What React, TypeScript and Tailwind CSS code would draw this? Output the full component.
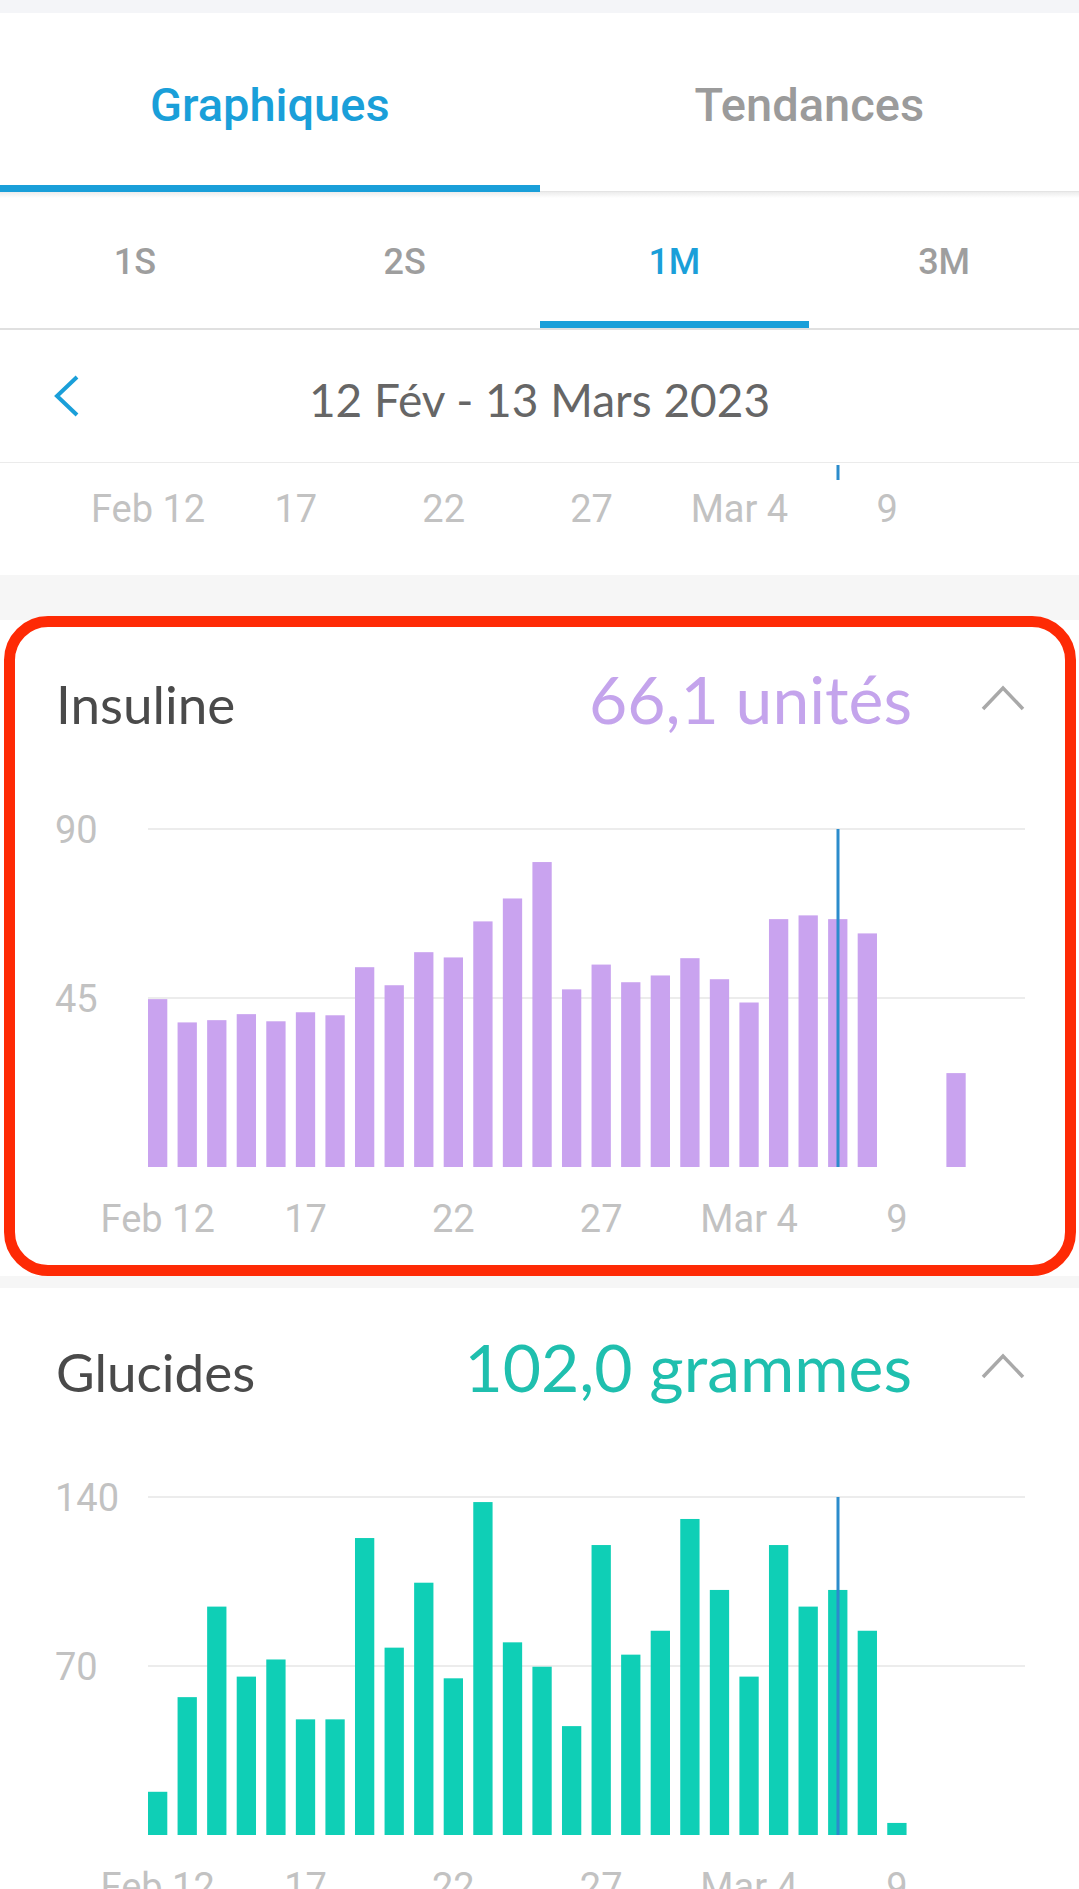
import React from 'react';

const insuline: (number | null)[] = [
  44.7, 38.5, 39.1, 40.7, 38.8, 41.2, 40.4, 53.2, 48.4, 57.2, 55.8, 65.4, 71.5, 81.2, 47.3,
  53.9, 49.2, 51.0, 55.6, 50.0, 43.8, 66.0, 67.0, 66.0, 62.2, null, null, 25.0, null, null,
];

const glucides: (number | null)[] = [
  17.9, 57.1, 94.6, 65.6, 72.7, 47.9, 47.9, 123.0, 77.6, 104.5, 64.9, 137.9, 79.8, 69.7, 45.1,
  120.1, 74.7, 84.6, 130.9, 101.5, 65.6, 120.1, 94.6, 101.5, 84.6, 5.0, null, null, null, null,
];

const dayLabels = ['Feb 12', '17', '22', '27', 'Mar 4', '9'];

const PITCH = 29.57;
const BAR_W = 19.3;
const LEFT = 148;

function BarChart({ values, max, color }: { values: (number | null)[]; max: number; color: string }) {
  const scale = 338 / max;
  return (
    <svg width="1079" height="460" viewBox="0 0 1079 460" className="block">
      <line x1={LEFT} x2="1025" y1="39" y2="39" stroke="#ececec" strokeWidth="2" />
      <line x1={LEFT} x2="1025" y1="208" y2="208" stroke="#ececec" strokeWidth="2" />
      <text x="55" y="53" fill="#c2c2c2" fontSize="38" fontFamily="Roboto, sans-serif">
        {max}
      </text>
      <text x="55" y="222" fill="#c2c2c2" fontSize="38" fontFamily="Roboto, sans-serif">
        {max / 2}
      </text>
      {values.map((v, i) =>
        v == null ? null : (
          <rect key={i} x={LEFT + i * PITCH} y={377 - v * scale} width={BAR_W} height={v * scale} fill={color} />
        ),
      )}
      <rect x="836.5" y="39" width="3" height="338" fill="#2b8ccc" />
      {dayLabels.map((d, k) => (
        <text
          key={d}
          x={LEFT + BAR_W / 2 + k * 5 * PITCH}
          y="442"
          textAnchor="middle"
          fill="#c2c2c2"
          fontSize="38"
          fontFamily="Roboto, sans-serif"
        >
          {d}
        </text>
      ))}
    </svg>
  );
}

function Caret() {
  return (
    <svg width="44" height="27" viewBox="0 0 44 27" className="ml-[69px] mt-[19px] shrink-0">
      <polyline points="2,24 22,3 42,24" fill="none" stroke="#a9a9a9" strokeWidth="3.5" />
    </svg>
  );
}

function Card({
  title,
  value,
  valueColor,
  values,
  max,
  barColor,
}: {
  title: string;
  value: string;
  valueColor: string;
  values: (number | null)[];
  max: number;
  barColor: string;
}) {
  return (
    <>
      <div className="flex items-start pl-[56px] pr-[54px] pt-[46px]">
        <div className="flex flex-1 items-baseline justify-between [font-family:Lato,sans-serif]">
          <span className="text-[53px] leading-none text-[#4a4a4a]">{title}</span>
          <span className={`text-[66px] leading-none ${valueColor}`}>{value}</span>
        </div>
        <Caret />
      </div>
      <div className="mt-[58px]">
        <BarChart values={values} max={max} color={barColor} />
      </div>
    </>
  );
}

export default function App() {
  const periods = ['1S', '2S', '1M', '3M'];

  return (
    <div className="w-[1079px] bg-white [font-family:Roboto,sans-serif]">
      <div className="h-[13px] bg-[#f4f5f8]" />

      {/* Main tabs */}
      <div className="flex h-[179px]">
        <div className="flex flex-1 flex-col items-center">
          <span className="pt-[68px] text-[47px] font-medium leading-none text-[#1a9fd9]">Graphiques</span>
          <div className="mt-auto h-[7px] w-full bg-[#1a9fd9]" />
        </div>
        <div className="flex flex-1 flex-col items-center border-b border-[#e4e4e4]">
          <span className="pt-[68px] text-[47px] font-medium leading-none text-[#9b9b9b]">Tendances</span>
        </div>
      </div>
      <div className="h-[6px] bg-gradient-to-b from-[#ececec] to-white" />

      {/* Period tabs */}
      <div className="flex h-[130px]">
        {periods.map((p) => (
          <div key={p} className="flex flex-1 flex-col items-center">
            <span
              className={`pt-[46px] text-[36px] font-medium leading-none ${
                p === '1M' ? 'text-[#1a9fd9]' : 'text-[#9e9e9e]'
              }`}
            >
              {p}
            </span>
            {p === '1M' && <div className="mt-auto h-[7px] w-full bg-[#1a9fd9]" />}
          </div>
        ))}
      </div>
      <div className="h-[2px] bg-[#e0e0e0]" />

      {/* Date header */}
      <div className="flex h-[133px] items-center border-b border-[#ebebeb]">
        <svg width="26" height="42" viewBox="0 0 26 42" className="ml-[53px] shrink-0">
          <polyline points="24,2 4,21 24,40" fill="none" stroke="#1a9fd9" strokeWidth="4" />
        </svg>
        <div className="flex-1 pt-[7px] text-center text-[46px] leading-none text-[#666666] [font-family:Lato,sans-serif]">
          12 Fév - 13 Mars 2023
        </div>
        <div className="mr-[53px] w-[26px] shrink-0" />
      </div>

      {/* Scrubber strip */}
      <svg width="1079" height="112" viewBox="0 0 1079 112" className="block">
        <rect x="836.5" y="2" width="3" height="15" fill="#2b8ccc" />
        {dayLabels.map((d, k) => (
          <text
            key={d}
            x={148 + k * 147.85}
            y="59"
            textAnchor="middle"
            fill="#c2c2c2"
            fontSize="38"
            fontFamily="Roboto, sans-serif"
          >
            {d}
          </text>
        ))}
      </svg>

      <div className="h-[45px] bg-[#f6f6f6]" />

      {/* Insuline */}
      <div className="relative h-[656px] bg-white">
        <Card
          title="Insuline"
          value="66,1 unités"
          valueColor="text-[#c4a4ec]"
          values={insuline}
          max={90}
          barColor="#c9a3ef"
        />
        <div className="pointer-events-none absolute -top-[4px] right-[3px] bottom-0 left-[4px] rounded-[44px] border-[11px] border-[#fe2a05]" />
      </div>

      <div className="h-[12px] bg-[#f6f6f6]" />

      {/* Glucides */}
      <div className="h-[656px] bg-white">
        <Card
          title="Glucides"
          value="102,0 grammes"
          valueColor="text-[#1fbfae]"
          values={glucides}
          max={140}
          barColor="#0fcfb6"
        />
      </div>
    </div>
  );
}
